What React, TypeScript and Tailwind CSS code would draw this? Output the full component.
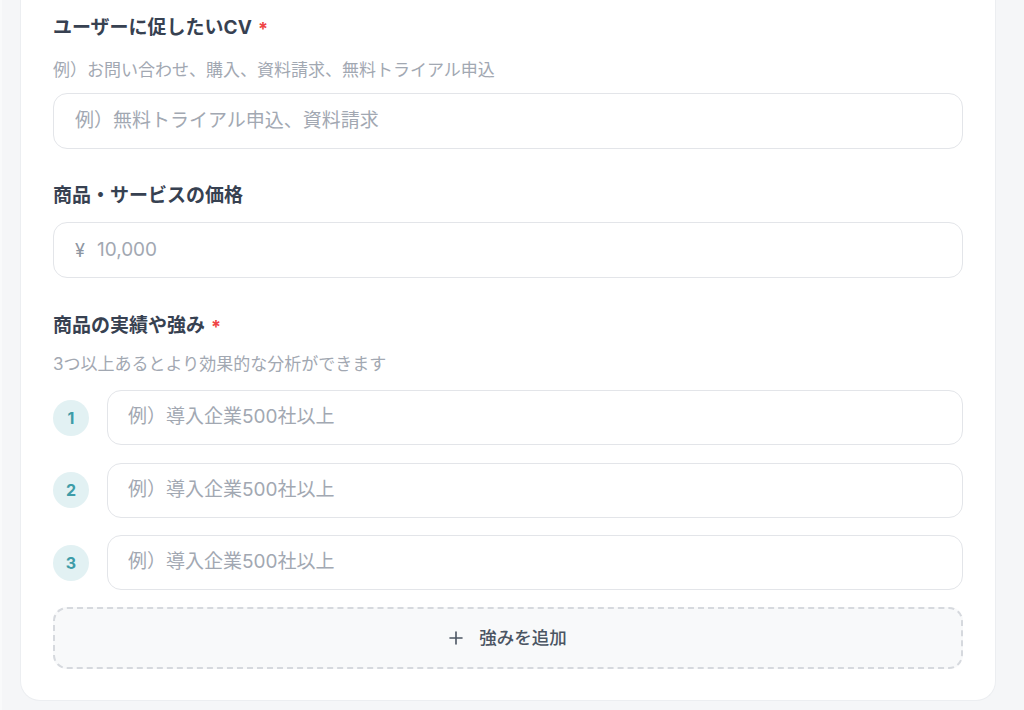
import React from "react";

const font = { fontFamily: 'Inter, "Noto Sans CJK JP", sans-serif' };

function Label({ children, required }: { children: React.ReactNode; required?: boolean }) {
  return (
    <div className="flex items-center h-[28px] text-[19px] font-bold text-[#374151] leading-[28px]">
      <span>{children}</span>
      {required && <span className="ml-[6px] text-[18px] text-[#ef4444] leading-none mt-[2px]">*</span>}
    </div>
  );
}

function Field({ placeholder, prefix }: { placeholder: string; prefix?: string }) {
  return (
    <div className="flex items-center h-[56px] w-full rounded-[14px] border border-[#e3e5e9] bg-white px-[21px]">
      {prefix && <span className="mr-[12px] text-[18px] text-[#8d95a1]">{prefix}</span>}
      <input
        className="flex-1 bg-transparent outline-none text-[19px] text-[#374151] placeholder:text-[#a2a8b2]"
        style={font}
        placeholder={placeholder}
      />
    </div>
  );
}

export default function App() {
  return (
    <div className="w-[1024px] h-[710px] overflow-hidden bg-[#f5f6f8] flex" style={font}>
      <div className="w-[2px] h-full bg-[#f9fafb]" />
      <div className="ml-[18px] w-[976px] h-[701px] bg-white rounded-b-[20px] border-x border-b border-[#eceef1] px-[32px] pt-[14px] flex flex-col">
        <Label required>ユーザーに促したいCV</Label>
        <div className="mt-[16px] text-[17px] leading-[24px] text-[#a2a8b2]">例）お問い合わせ、購入、資料請求、無料トライアル申込</div>
        <div className="mt-[11px]">
          <Field placeholder="例）無料トライアル申込、資料請求" />
        </div>

        <div className="mt-[33px]">
          <Label>商品・サービスの価格</Label>
        </div>
        <div className="mt-[12px]">
          <Field prefix="¥" placeholder="10,000" />
        </div>

        <div className="mt-[34px]">
          <Label required>商品の実績や強み</Label>
        </div>
        <div className="mt-[12px] text-[17px] leading-[24px] text-[#a2a8b2]">3つ以上あるとより効果的な分析ができます</div>

        <div className="mt-[14px] flex flex-col gap-[17.5px]">
          {[1, 2, 3].map((n) => (
            <div key={n} className="flex items-center gap-[18px]">
              <div className="w-[36px] h-[36px] shrink-0 rounded-full bg-[#e2f1f3] flex items-center justify-center text-[16px] font-bold text-[#3e9ca8]">
                {n}
              </div>
              <div className="flex-1">
                <div className="flex items-center h-[55px] w-full rounded-[14px] border border-[#e3e5e9] bg-white px-[20px]">
                  <input
                    className="flex-1 bg-transparent outline-none text-[19px] text-[#374151] placeholder:text-[#a2a8b2]"
                    style={font}
                    placeholder="例）導入企業500社以上"
                  />
                </div>
              </div>
            </div>
          ))}
        </div>

        <button
          className="mt-[17px] h-[62px] w-full rounded-[14px] border-2 border-dashed border-[#d6d9de] bg-[#f8f9fa] flex items-center justify-center gap-[16px] text-[#4b5563]"
          style={font}
        >
          <svg width="14" height="14" viewBox="0 0 14 14" fill="none">
            <path d="M7 1v12M1 7h12" stroke="#4b5563" strokeWidth="1.6" strokeLinecap="round" />
          </svg>
          <span className="text-[17.5px] font-medium">強みを追加</span>
        </button>
      </div>
    </div>
  );
}
